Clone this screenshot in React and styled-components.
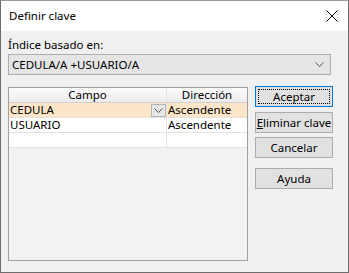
import React from 'react';
import styled, { createGlobalStyle } from 'styled-components';

const Global = createGlobalStyle`
  html, body {
    margin: 0;
    padding: 0;
    background: #ffffff;
  }
  * {
    box-sizing: border-box;
  }
`;

const Window = styled.div`
  width: 349px;
  height: 273px;
  display: flex;
  flex-direction: column;
  border: 1px solid #6d6d6d;
  border-top-color: #9a9a9a;
  font-family: "Noto Sans", "Liberation Sans", sans-serif;
  font-size: 11.5px;
  color: #000;
  background: #f0f0f0;
`;

const TitleBar = styled.div`
  height: 30px;
  flex: none;
  background: #ffffff;
  display: flex;
  align-items: center;
  justify-content: space-between;
  padding: 0 10px 1px 8px;
`;

const Title = styled.span`
  font-size: 11.5px;
  color: #000;
`;

const Body = styled.div`
  flex: 1;
  padding: 6px 7px 0 7px;
  display: flex;
  flex-direction: column;
`;

const Label = styled.div`
  line-height: 16px;
  height: 16px;
`;

const Combo = styled.div`
  margin-top: 1px;
  width: 323px;
  height: 21px;
  border: 1px solid #adadad;
  background: #e5e5e5;
  display: flex;
  align-items: center;
  justify-content: space-between;
  padding: 0 6px 0 3px;
  white-space: nowrap;
`;

const Main = styled.div`
  margin-top: 12px;
  display: flex;
  align-items: flex-start;
  gap: 7px;
`;

const Grid = styled.div`
  width: 240px;
  height: 174px;
  border: 1px solid #a0a0a0;
  background: #f2f2f2;
  display: flex;
  flex-direction: column;
`;

const Row = styled.div`
  display: grid;
  grid-template-columns: 158px 1fr;
  height: 14px;
  background: ${p => (p.header ? 'linear-gradient(#fbfbfb, #ececec)' : p.selected ? '#fde6c8' : '#ffffff')};
  border-bottom: 1px solid ${p => (p.header ? '#d0d0d0' : '#e2e2e2')};
  box-sizing: content-box;
`;

const Cell = styled.div`
  display: flex;
  align-items: center;
  justify-content: ${p => (p.center ? 'center' : 'space-between')};
  height: 14px;
  line-height: 14px;
  padding-left: ${p => (p.center ? '0' : '1px')};
  border-right: ${p => (p.last ? 'none' : '1px solid #e2e2e2')};
  white-space: nowrap;
`;

const CellButton = styled.div`
  width: 15px;
  height: 13px;
  margin-top: 1px;
  border: 1px solid #b5b5b5;
  background: #e6e6e6;
  display: flex;
  align-items: center;
  justify-content: center;
`;

const Buttons = styled.div`
  display: flex;
  flex-direction: column;
  margin-top: -1px;
`;

const Button = styled.div`
  width: 78px;
  height: 21px;
  margin-top: ${p => p.gap || 0}px;
  border: 1px solid ${p => (p.primary ? '#0078d7' : '#adadad')};
  background: #e1e1e1;
  display: flex;
  align-items: center;
  justify-content: center;
  position: relative;
  line-height: 14px;
  white-space: nowrap;
`;

const Focus = styled.div`
  position: absolute;
  inset: 2px;
  border: 1px dotted #000;
`;

const Chevron = ({ size = 9 }) => (
  <svg width={size} height={5} viewBox="0 0 9 5">
    <path d="M0.5 0.5 L4.5 4.5 L8.5 0.5" fill="none" stroke="#555" strokeWidth="1" />
  </svg>
);

const CloseIcon = () => (
  <svg width="12" height="12" viewBox="0 0 12 12">
    <path d="M0.5 0.5 L11.5 11.5 M11.5 0.5 L0.5 11.5" stroke="#000" strokeWidth="1" />
  </svg>
);

export default function App() {
  const rows = [
    { campo: 'CEDULA', dir: 'Ascendente', selected: true },
    { campo: 'USUARIO', dir: 'Ascendente' },
    { campo: '', dir: '' },
  ];
  return (
    <>
      <Global />
      <Window>
        <TitleBar>
          <Title>Definir clave</Title>
          <CloseIcon />
        </TitleBar>
        <Body>
          <Label>Índice basado en:</Label>
          <Combo>
            <span>CEDULA/A +USUARIO/A</span>
            <Chevron />
          </Combo>
          <Main>
            <Grid>
              <Row header>
                <Cell center>Campo</Cell>
                <Cell center last>Dirección</Cell>
              </Row>
              {rows.map((r, i) => (
                <Row key={i} selected={r.selected}>
                  <Cell>
                    <span>{r.campo}</span>
                    {r.selected && (
                      <CellButton>
                        <Chevron size={9} />
                      </CellButton>
                    )}
                  </Cell>
                  <Cell last>{r.dir}</Cell>
                </Row>
              ))}
            </Grid>
            <Buttons>
              <Button primary>
                <Focus />
                Aceptar
              </Button>
              <Button gap={5}>
                <span><u>E</u>liminar clave</span>
              </Button>
              <Button gap={4}>Cancelar</Button>
              <Button gap={10}>Ayuda</Button>
            </Buttons>
          </Main>
        </Body>
      </Window>
    </>
  );
}
